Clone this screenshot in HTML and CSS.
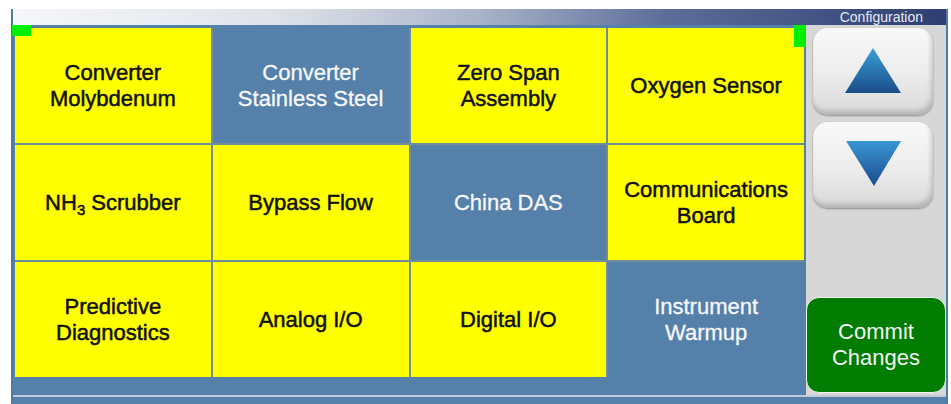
FILE: index.html
```html
<!DOCTYPE html>
<html lang="en">
<head>
  <meta charset="UTF-8">
  <meta name="viewport" content="width=device-width, initial-scale=1.0">
  <title>Configuration</title>
  <link rel="stylesheet" href="styles.css">
</head>
<body>

<div class="screen">
  <!-- Barra de título -->
  <div class="title-bar">Configuration</div>

  <div class="main">
    <span class="marker marker-left"></span>
    <span class="marker marker-right"></span>

    <!-- Opciones -->
    <div class="options">
      <div class="grid">
        <div class="cell on"><span>Converter<br>Molybdenum</span></div>
        <div class="cell off"><span>Converter<br>Stainless Steel</span></div>
        <div class="cell on"><span>Zero Span<br>Assembly</span></div>
        <div class="cell on"><span>Oxygen Sensor</span></div>

        <div class="cell on"><span>NH<sub>3</sub> Scrubber</span></div>
        <div class="cell on"><span>Bypass Flow</span></div>
        <div class="cell off"><span>China DAS</span></div>
        <div class="cell on"><span>Communications<br>Board</span></div>

        <div class="cell on"><span>Predictive<br>Diagnostics</span></div>
        <div class="cell on"><span>Analog I/O</span></div>
        <div class="cell on"><span>Digital I/O</span></div>
        <div class="cell off"><span>Instrument<br>Warmup</span></div>
      </div>
    </div>

    <!-- Panel lateral -->
    <div class="side">
      <button class="arrow-btn">
        <svg width="56" height="45" viewBox="0 0 56 45">
          <defs>
            <linearGradient id="gUp" x1="0" y1="0" x2="0" y2="1">
              <stop offset="0" stop-color="#3aa0d8"/>
              <stop offset="1" stop-color="#1a4c88"/>
            </linearGradient>
          </defs>
          <polygon points="28,0 56,45 0,45" fill="url(#gUp)"/>
        </svg>
      </button>
      <button class="arrow-btn down">
        <svg width="55" height="45" viewBox="0 0 55 45">
          <defs>
            <linearGradient id="gDown" x1="0" y1="0" x2="0" y2="1">
              <stop offset="0" stop-color="#3a96d4"/>
              <stop offset="1" stop-color="#1a4a8c"/>
            </linearGradient>
          </defs>
          <polygon points="0,0 55,0 28,45" fill="url(#gDown)"/>
        </svg>
      </button>
      <button class="commit">Commit<br>Changes</button>
    </div>
  </div>

  <div class="footer"></div>
</div>

</body>
</html>
```

FILE: styles.css
```css
/* Pantalla de configuración */
body {
  margin: 0;
  background: #fff;
  font-family: "Liberation Sans", Arial, sans-serif;
}

.screen {
  position: relative;
  margin: 9px 0 0 11px;
  width: 933px;
  height: 395px;
  border-left: 2px solid #4f7aa8;
  border-right: 2px solid #4f7aa8;
  display: flex;
  flex-direction: column;
}

.title-bar {
  height: 16px;
  line-height: 16px;
  font-size: 14px;
  text-align: right;
  padding-right: 23px;
  color: #e6eaf4;
  background: linear-gradient(to right, #f6f7f9 0%, #dfe3ea 28%, #a9b3c9 50%, #5d6d99 70%, #2e3e72 100%);
}

.main {
  position: relative;
  display: flex;
  height: 370px;
}

.marker {
  position: absolute;
  top: 0;
  background: #00ee00;
  z-index: 2;
}

.marker-left {
  left: -1px;
  width: 19px;
  height: 11px;
}

.marker-right {
  left: 781px;
  width: 12px;
  height: 22px;
}

.options {
  width: 791px;
  background: #5580aa;
  padding: 3px 2px 18px 2px;
}

.grid {
  display: grid;
  grid-template-columns: repeat(4, 1fr);
  grid-template-rows: repeat(3, 115px);
  gap: 2px;
  background: #6f8c9c;
}

.cell {
  display: flex;
  align-items: center;
  justify-content: center;
  text-align: center;
  font-size: 22px;
  line-height: 26px;
}

.cell.on {
  background: #ffff00;
  color: #111;
  -webkit-text-stroke: 0.5px #111;
}

.cell.off {
  background: #5580aa;
  color: #f6f8fa;
  -webkit-text-stroke: 0.3px #f6f8fa;
}

.cell sub {
  font-size: 15px;
  line-height: 0;
}

.side {
  flex: 1;
  background: #d7d7d7;
  display: flex;
  flex-direction: column;
  align-items: flex-start;
  padding: 3px 0 2px 7px;
}

.arrow-btn {
  width: 120px;
  height: 87px;
  border: none;
  border-radius: 15px;
  background: linear-gradient(#f9f9f9, #ececec 55%, #d9d9d9);
  box-shadow: inset -2px -4px 5px rgba(0, 0, 0, 0.18), 0 1px 2px rgba(0, 0, 0, 0.35);
  display: flex;
  align-items: center;
  justify-content: center;
  padding: 0 0 2px 0;
}

.arrow-btn.down {
  margin-top: 7px;
  height: 86px;
  padding: 0 0 4px 0;
}

.commit {
  margin-top: auto;
  margin-left: -7px;
  width: 140px;
  height: 96px;
  border: 1px solid #f2f2f2;
  border-radius: 13px;
  background: #007d00;
  color: #f4f4f4;
  font-family: "Liberation Sans", Arial, sans-serif;
  font-size: 22px;
  line-height: 26px;
  padding: 0;
}

.footer {
  height: 7px;
  border-top: 2px solid #c3cbd8;
  background: #5580aa;
}
```
